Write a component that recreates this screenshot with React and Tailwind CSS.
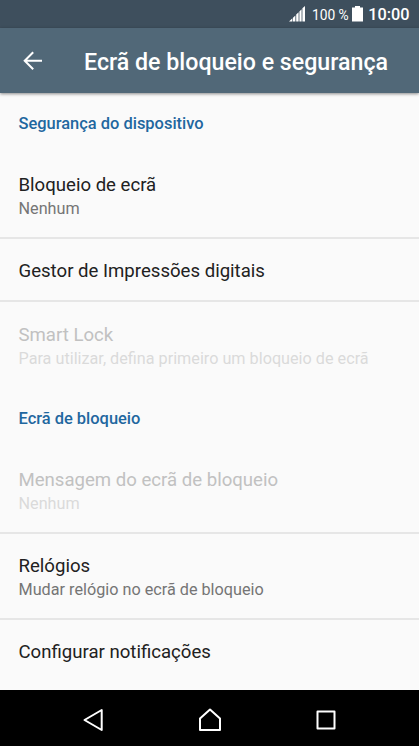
function SectionHeader({ children }) {
  return (
    <h2 className="flex h-[61px] shrink-0 items-center px-[18.5px] pt-[2px] text-[16.45px] font-medium text-[#1f679f]">
      {children}
    </h2>
  );
}

function Row({ title, subtitle, disabled, divider, height }) {
  return (
    <div
      className={`flex shrink-0 flex-col justify-center px-[18.5px] ${height} ${
        divider ? "border-b-2 border-[#e6e6e6] pt-[2px]" : subtitle ? "pt-[2px]" : ""
      }`}
    >
      <div className={`text-[18.6px] leading-6 ${disabled ? "text-[#c1c1c1]" : "text-[#212121]"}`}>
        {title}
      </div>
      {subtitle && (
        <div className={`text-[16.22px] leading-[23px] ${disabled ? "text-[#dadada]" : "text-[#757575]"}`}>
          {subtitle}
        </div>
      )}
    </div>
  );
}

function StatusBar() {
  return (
    <div className="flex h-7 shrink-0 items-center justify-end bg-[#3e4f5d] pr-[9.5px] text-white">
      <svg className="h-4 w-[17px]" viewBox="0 0 17 16" fill="#fff">
        <path d="M0 15.5 3.4 12.3V15.5ZM4 11.8 6.4 9.4V15.5H4ZM7.2 8.6 9.6 6.2V15.5H7.2ZM10.4 5.4 12.6 3.2V15.5H10.4ZM13.4 2.3 16 0V15.5H13.4Z" />
      </svg>
      <span className="ml-[5.5px] mt-px text-[13.8px] leading-7">100 %</span>
      <svg className="ml-[3.5px] h-4 w-[11px]" viewBox="0 0 11 16" fill="#fff">
        <path d="M3 0H8V1.6H11V15.6H0V1.6H3Z" />
      </svg>
      <span className="ml-[5px] mt-px text-[16.3px] font-medium leading-7">10:00</span>
    </div>
  );
}

export default function App() {
  return (
    <div className="flex h-[746px] w-[419px] flex-col overflow-hidden bg-[#fafafa] font-['Roboto',sans-serif]">
      <StatusBar />
      <header className="z-10 flex h-[65px] shrink-0 items-center bg-[#516878] text-white shadow-[0_1px_3px_rgba(0,0,0,0.45)]">
        <svg className="ml-[22px] h-5 w-5" viewBox="0 0 20 20" fill="none" stroke="#fff" strokeWidth="2">
          <path d="M20 9.8H2.7M11.2 1.3 2.7 9.8 11.2 18.3" />
        </svg>
        <h1 className="ml-[42px] mt-[3px] whitespace-nowrap text-[23.2px] font-medium">
          Ecrã de bloqueio e segurança
        </h1>
      </header>
      <main className="flex min-h-0 flex-1 flex-col overflow-hidden">
        <SectionHeader>Segurança do dispositivo</SectionHeader>
        <Row title="Bloqueio de ecrã" subtitle="Nenhum" divider height="h-[85px]" />
        <Row title="Gestor de Impressões digitais" divider height="h-[63px]" />
        <Row
          title="Smart Lock"
          subtitle="Para utilizar, defina primeiro um bloqueio de ecrã"
          disabled
          height="h-[86px]"
        />
        <SectionHeader>Ecrã de bloqueio</SectionHeader>
        <Row title="Mensagem do ecrã de bloqueio" subtitle="Nenhum" disabled divider height="h-[85px]" />
        <Row title="Relógios" subtitle="Mudar relógio no ecrã de bloqueio" divider height="h-[86px]" />
        <Row title="Configurar notificações" height="h-[63px]" />
      </main>
      <nav className="flex h-14 shrink-0 items-center justify-between bg-black pl-[81px] pr-[81px]">
        <svg className="mt-[4px] h-6 w-6" viewBox="0 0 24 24" fill="none" stroke="#fff" strokeWidth="2" strokeLinejoin="round">
          <path d="M20.7 2V22L3.5 12Z" />
        </svg>
        <svg className="mt-[3px] h-6 w-6" viewBox="0 0 24 24" fill="none" stroke="#fff" strokeWidth="2" strokeLinejoin="round">
          <path d="M12 1.5 22 10.5V22H2V10.5Z" />
        </svg>
        <svg className="mt-[4px] h-6 w-6" viewBox="0 0 24 24" fill="none" stroke="#fff" strokeWidth="2" strokeLinejoin="round">
          <path d="M3.5 3.5H20.5V20.5H3.5Z" />
        </svg>
      </nav>
    </div>
  );
}
